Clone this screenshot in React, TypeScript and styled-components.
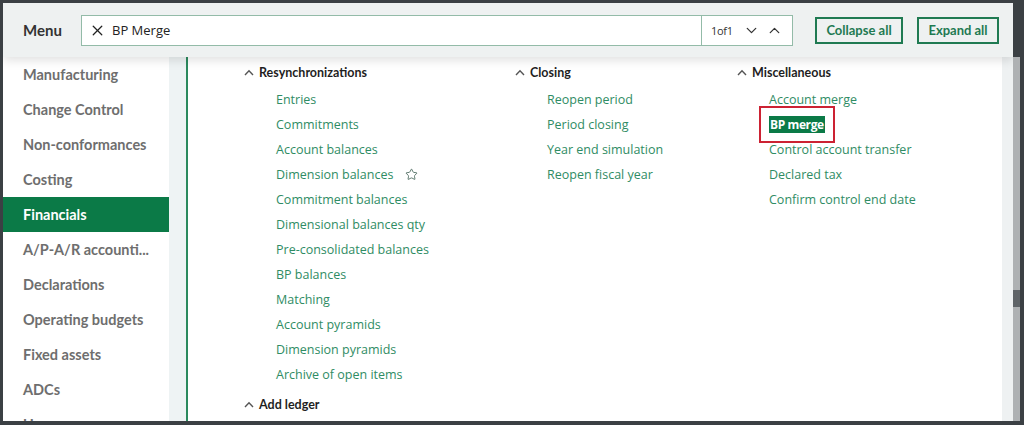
import React from "react";
import styled, { createGlobalStyle } from "styled-components";
import { ChevronDown, ChevronUp, Star, X } from "lucide-react";

const GlobalStyle = createGlobalStyle`
  html, body {
    margin: 0;
    padding: 0;
    background: #3b4044;
  }
  body {
    font-family: "Open Sans", "Liberation Sans", sans-serif;
  }
  * {
    box-sizing: border-box;
  }
`;

const modules = [
  "Manufacturing",
  "Change Control",
  "Non-conformances",
  "Costing",
  "Financials",
  "A/P-A/R accounti...",
  "Declarations",
  "Operating budgets",
  "Fixed assets",
  "ADCs",
  "Usage",
];

type Section = {
  title: string;
  items: string[];
};

const columns: Section[][] = [
  [
    {
      title: "Resynchronizations",
      items: [
        "Entries",
        "Commitments",
        "Account balances",
        "Dimension balances",
        "Commitment balances",
        "Dimensional balances qty",
        "Pre-consolidated balances",
        "BP balances",
        "Matching",
        "Account pyramids",
        "Dimension pyramids",
        "Archive of open items",
      ],
    },
    { title: "Add ledger", items: [] },
  ],
  [
    {
      title: "Closing",
      items: ["Reopen period", "Period closing", "Year end simulation", "Reopen fiscal year"],
    },
  ],
  [
    {
      title: "Miscellaneous",
      items: [
        "Account merge",
        "BP merge",
        "Control account transfer",
        "Declared tax",
        "Confirm control end date",
      ],
    },
  ],
];

const colWidths = [271, 222, 240];

const Caret = () => (
  <svg width="10" height="7" viewBox="0 0 10 7" fill="none">
    <polyline points="1,6 5,1.8 9,6" stroke="#555" strokeWidth="1.4" />
  </svg>
);

export default function App() {
  return (
    <>
      <GlobalStyle />
      <Frame>
        <Panel>
          <Header>
            <MenuTitle>Menu</MenuTitle>
            <Search>
              <SearchField>
                <X size={17} strokeWidth={1.8} color="#222" />
                <SearchText>BP Merge</SearchText>
              </SearchField>
              <Counter>
                <CountText>1of1</CountText>
                <ChevronDown size={17} strokeWidth={1.8} color="#333" />
                <ChevronUp size={17} strokeWidth={1.8} color="#333" />
              </Counter>
            </Search>
            <OutlineButton $gap={22} $width={88}>
              Collapse all
            </OutlineButton>
            <OutlineButton $gap={14} $width={82}>
              Expand all
            </OutlineButton>
          </Header>
          <Body>
            <Sidebar>
              <SideList>
                {modules.map((m) => (
                  <SideItem key={m} $active={m === "Financials"}>
                    {m}
                  </SideItem>
                ))}
              </SideList>
              <SideTrack />
            </Sidebar>
            <Content>
              {columns.map((col, i) => (
                <Column key={i} $width={colWidths[i]}>
                  {col.map((sec, j) => (
                    <SectionBlock key={sec.title} $first={j === 0}>
                      <SectionHead>
                        <Caret />
                        <SectionTitle>{sec.title}</SectionTitle>
                      </SectionHead>
                      {sec.items.length > 0 && (
                        <Links>
                          {sec.items.map((it) => (
                            <LinkRow key={it}>
                              {it === "BP merge" ? (
                                <Found>{it}</Found>
                              ) : (
                                <LinkText>{it}</LinkText>
                              )}
                              {it === "Dimension balances" && (
                                <StarWrap>
                                  <Star size={13} strokeWidth={1.5} color="#3f5f52" />
                                </StarWrap>
                              )}
                            </LinkRow>
                          ))}
                        </Links>
                      )}
                    </SectionBlock>
                  ))}
                </Column>
              ))}
            </Content>
            <ScrollTrack />
          </Body>
        </Panel>
        <OuterBar>
          <OuterThumb />
        </OuterBar>
      </Frame>
    </>
  );
}

const Frame = styled.div`
  width: 1024px;
  height: 425px;
  overflow: hidden;
  display: flex;
  padding: 3px 0 0 3px;
`;

const Panel = styled.div`
  width: 1010px;
  height: 418px;
  flex-shrink: 0;
  display: flex;
  flex-direction: column;
  background: #ffffff;
  overflow: hidden;
`;

const Header = styled.div`
  height: 54px;
  flex-shrink: 0;
  display: flex;
  align-items: center;
  padding: 0 0 0 20px;
  background: #eef1f1;
  position: relative;
  z-index: 1;
  box-shadow: 0 3px 10px rgba(0, 0, 0, 0.13);
`;

const MenuTitle = styled.div`
  width: 58px;
  flex-shrink: 0;
  font-family: Lato, "Liberation Sans", sans-serif;
  font-weight: 700;
  font-size: 15px;
  color: #333;
`;

const Search = styled.div`
  width: 712px;
  height: 31px;
  flex-shrink: 0;
  display: flex;
  background: #fff;
  border: 1px solid #93bba8;
`;

const SearchField = styled.div`
  flex: 1;
  display: flex;
  align-items: center;
  gap: 6px;
  padding-left: 7px;
`;

const SearchText = styled.span`
  font-size: 13px;
  color: #222;
`;

const Counter = styled.div`
  width: 91px;
  flex-shrink: 0;
  display: flex;
  align-items: center;
  gap: 6px;
  padding-left: 9px;
  border-left: 1px solid #93bba8;
`;

const CountText = styled.span`
  font-size: 11px;
  color: #333;
  letter-spacing: -0.3px;
  margin-right: 4px;
`;

const OutlineButton = styled.button<{ $gap: number; $width: number }>`
  margin-left: ${({ $gap }) => $gap}px;
  width: ${({ $width }) => $width}px;
  height: 27px;
  flex-shrink: 0;
  padding: 0;
  white-space: nowrap;
  background: transparent;
  border: 2px solid #1f7a52;
  font-family: Lato, "Liberation Sans", sans-serif;
  font-weight: 700;
  font-size: 13px;
  color: #1f7a52;
`;

const Body = styled.div`
  flex: 1;
  min-height: 0;
  display: flex;
`;

const Sidebar = styled.div`
  width: 185px;
  flex-shrink: 0;
  display: flex;
  border-right: 2px solid #2b8a5e;
`;

const SideList = styled.div`
  width: 166px;
  background: #fff;
`;

const SideItem = styled.div<{ $active?: boolean }>`
  height: 35px;
  display: flex;
  align-items: center;
  padding-left: 20px;
  font-family: Lato, "Liberation Sans", sans-serif;
  font-weight: 700;
  font-size: 14.5px;
  white-space: nowrap;
  color: ${({ $active }) => ($active ? "#ffffff" : "#6e6e6e")};
  background: ${({ $active }) => ($active ? "#0b7a47" : "transparent")};
`;

const SideTrack = styled.div`
  flex: 1;
  background: #eef3f4;
`;

const Content = styled.div`
  flex: 1;
  display: flex;
  align-items: flex-start;
  padding: 6px 0 0 56px;
`;

const Column = styled.div<{ $width: number }>`
  width: ${({ $width }) => $width}px;
`;

const SectionBlock = styled.div<{ $first?: boolean }>`
  margin-top: ${({ $first }) => ($first ? 0 : 8)}px;
`;

const SectionHead = styled.div`
  height: 18px;
  display: flex;
  align-items: center;
  gap: 5px;
`;

const SectionTitle = styled.span`
  font-family: Lato, "Liberation Sans", sans-serif;
  font-weight: 700;
  font-size: 12.5px;
  color: #1f1f1f;
`;

const Links = styled.div`
  margin-top: 6px;
  padding-left: 32px;
`;

const LinkRow = styled.div`
  height: 25px;
  display: flex;
  align-items: center;
`;

const LinkText = styled.span`
  font-size: 12.5px;
  color: #2f8c64;
  white-space: nowrap;
`;

const Found = styled.span`
  font-size: 12px;
  font-weight: 700;
  letter-spacing: -0.4px;
  color: #fff;
  background: #0b7a47;
  padding: 0 1px;
  line-height: 17px;
  white-space: nowrap;
  outline: 2px solid #cc2233;
  outline-offset: 8px;
`;

const StarWrap = styled.span`
  display: inline-flex;
  margin-left: 12px;
`;

const ScrollTrack = styled.div`
  width: 11px;
  flex-shrink: 0;
  background: #eef1f2;
`;

const OuterBar = styled.div`
  width: 7px;
  flex-shrink: 0;
  margin-top: 54px;
  height: 364px;
  background: #aeb1b3;
`;

const OuterThumb = styled.div`
  margin-top: 233px;
  height: 17px;
  background: #5f6468;
`;
